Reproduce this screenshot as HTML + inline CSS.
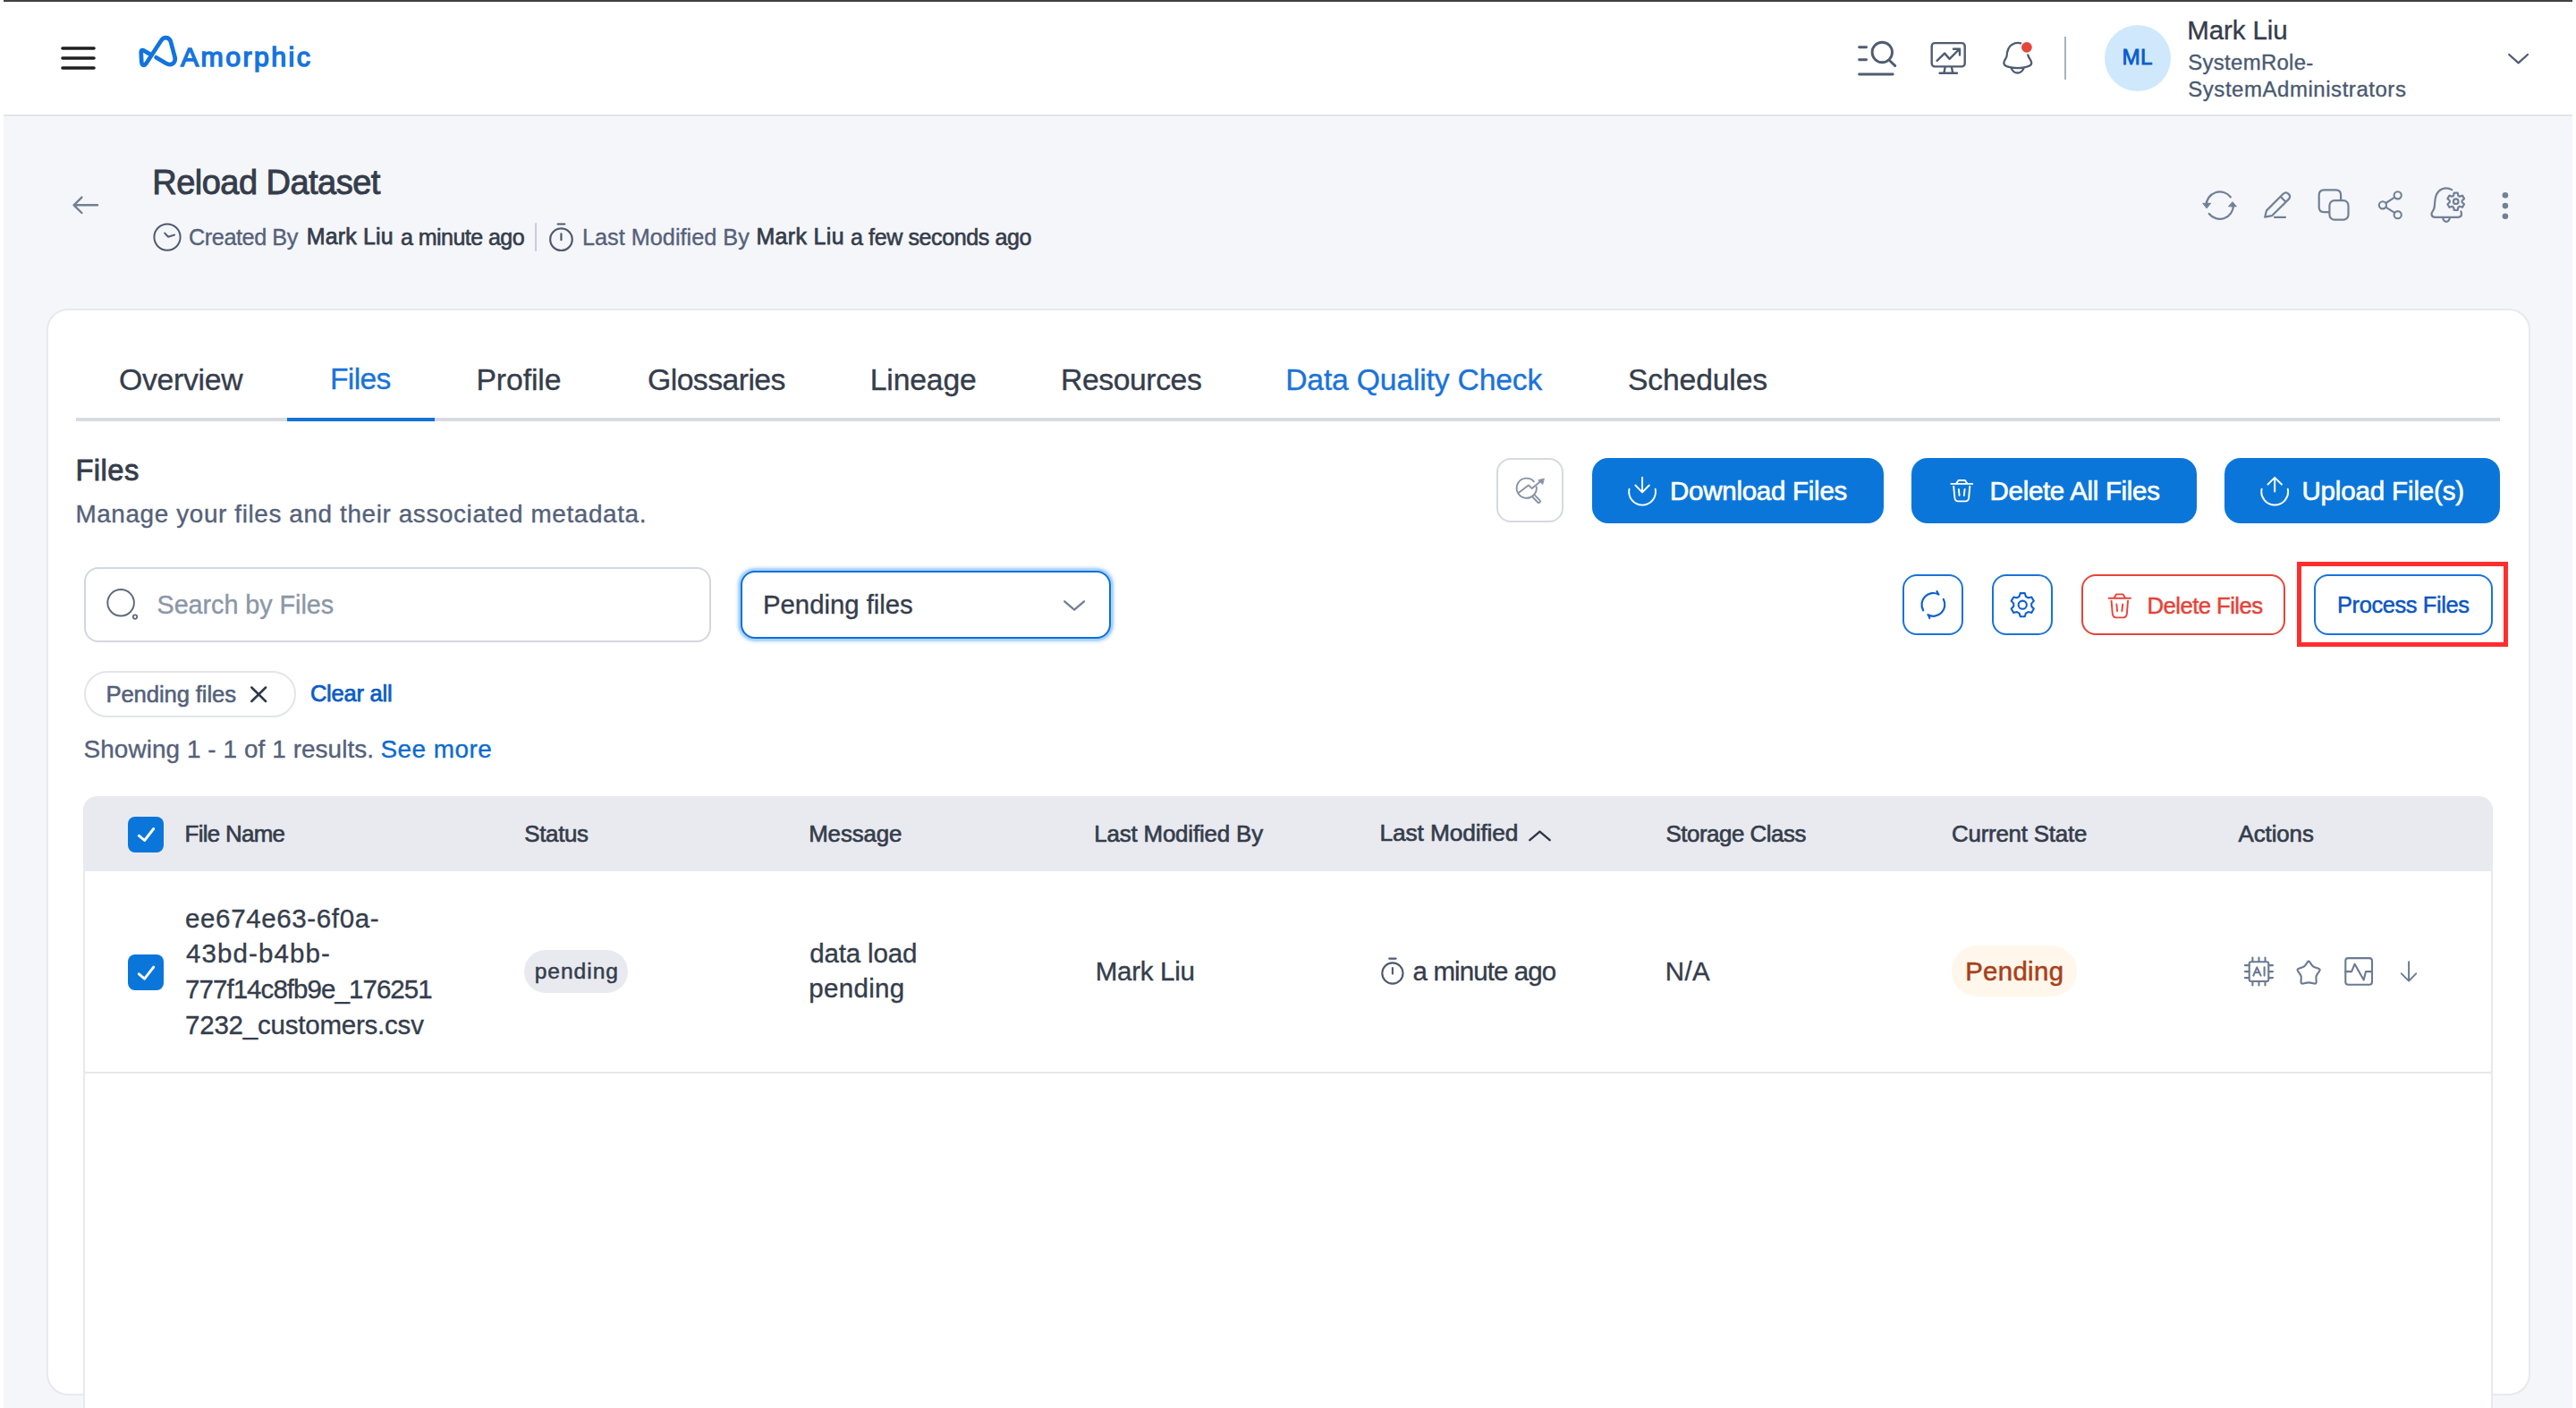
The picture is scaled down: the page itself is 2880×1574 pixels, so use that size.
<!DOCTYPE html>
<html><head><meta charset="utf-8"><style>
html,body{margin:0;padding:0;}
body{width:2880px;height:1574px;overflow:hidden;position:relative;background:#fff;font-family:"Liberation Sans",sans-serif;}
.s{position:absolute;box-sizing:border-box;}
.t{position:absolute;white-space:pre;font-family:"Liberation Sans",sans-serif;}
</style></head><body>
<div class=s style="left:4px;top:0;width:2872px;height:2px;background:#3f4142"></div>
<div class=s style="left:4px;top:128px;width:2872px;height:2px;background:#e3e5ea"></div>
<div class=s style="left:4px;top:130px;width:2872px;height:1444px;background:#f5f6fa"></div>
<div class=s style="left:52px;top:345px;width:2777px;height:1215px;background:#fff;border:2px solid #e7e9ee;border-radius:24px"></div>
<div class=s style="left:85px;top:467px;width:2710px;height:3.5px;background:#d8dce2"></div>
<div class=s style="left:321px;top:467px;width:165px;height:4px;background:#1472d8"></div>
<div class=s style="left:1673px;top:512px;width:75px;height:72px;border:2px solid #d5d9e0;border-radius:16px"></div>
<div class=s style="left:1780px;top:512px;width:326px;height:73px;background:#0b76d9;border-radius:18px"></div>
<div class=s style="left:2137px;top:512px;width:319px;height:73px;background:#0b76d9;border-radius:18px"></div>
<div class=s style="left:2487px;top:512px;width:308px;height:73px;background:#0b76d9;border-radius:18px"></div>
<div class=s style="left:94px;top:634px;width:701px;height:84px;border:2px solid #d3d7de;border-radius:16px;background:#fff"></div>
<div class=s style="left:828px;top:638px;width:414px;height:76px;border:2px solid #0b70d8;border-radius:16px;background:#fff;box-shadow:0 0 0 2.5px #a9d2fa,0 0 3px 4px rgba(165,208,250,0.6)"></div>
<div class=s style="left:2127px;top:642px;width:68px;height:68px;border:2px solid #1a73d9;border-radius:16px"></div>
<div class=s style="left:2227px;top:642px;width:68px;height:68px;border:2px solid #1a73d9;border-radius:16px"></div>
<div class=s style="left:2327px;top:642px;width:228px;height:68px;border:2px solid #e5443a;border-radius:16px"></div>
<div class=s style="left:2587px;top:642px;width:200px;height:68px;border:2px solid #1a73d9;border-radius:16px"></div>
<div class=s style="left:2568px;top:628px;width:236px;height:95px;border:5px solid #fe2e2e"></div>
<div class=s style="left:94px;top:750px;width:237px;height:52px;border:2px solid #e3e5ea;border-radius:26px"></div>
<div class=s style="left:93px;top:890px;width:2694px;height:700px;border:2px solid #e8e9ee;border-top:0;border-radius:16px 16px 0 0;background:#fff"></div>
<div class=s style="left:93px;top:890px;width:2694px;height:84px;background:#e9eaf0;border-radius:16px 16px 0 0"></div>
<div class=s style="left:95px;top:1198px;width:2690px;height:2px;background:#e8e9ee"></div>
<div class=s style="left:143px;top:913px;width:40px;height:40px;background:#0b76d9;border-radius:8px"></div>
<div class=s style="left:143px;top:1067px;width:40px;height:40px;background:#0b76d9;border-radius:8px"></div>
<div class=s style="left:586px;top:1062px;width:116px;height:48px;background:#e9eaf0;border-radius:24px"></div>
<div class=s style="left:2182px;top:1057px;width:140px;height:57px;background:#fff7eb;border-radius:28px"></div>
<div class=s style="left:2353px;top:28px;width:74px;height:74px;background:#cfe8fb;border-radius:50%"></div>
<div class=s style="left:2308px;top:41px;width:2px;height:48px;background:#a7b2c1"></div>

<svg class=s style="left:0;top:0" width="2880" height="1574" viewBox="0 0 2880 1574" fill="none" stroke-linecap="round" stroke-linejoin="round"><path stroke="#1f1f1f" stroke-width="3.6" d="M70 54H105M70 65H105M70 76H105"/>
<path stroke="#1273de" stroke-width="4.7" d="M174.6 64.2L185.5 70.8Q190.5 73.6 194 70.4Q196.4 68 195.6 64.2L190.8 46.3Q189.4 42.1 185.2 42.1Q182.2 42.1 180.2 45.3L163.2 71.2Q161.6 73.4 159.8 72.6Q158.4 71.8 158.3 69.6L157.7 58.4Q157.6 55.3 160.3 56.3L167.8 60.6"/>
<g stroke="#505c71" stroke-width="2.9"><path d="M2078.6 52.8H2086.6M2078.6 66.7H2086.6M2078.6 83H2116.2M2113.2 68.2L2118.8 73.6"/><circle cx="2104.3" cy="58.5" r="11.2"/></g>
<g stroke="#505c71" stroke-width="2.4"><rect x="2159.7" y="48.1" width="37" height="26.3" rx="3.5"/><path d="M2174.6 75.2L2173.4 81.6M2182 75.2L2183.2 81.6M2168.6 81.8H2188M2165.6 67.9L2174.1 59.6L2179.6 65.9L2190.4 55M2184 54.8H2191V61.6"/></g>
<g stroke="#505c71" stroke-width="2.3"><path d="M2259.2 48.3C2257.5 47.8 2253 47.5 2249.2 50C2245.2 52.6 2243.9 57 2243.6 62.5C2243.4 65.2 2240.2 67.6 2240.3 70.6C2240.5 73.8 2244 74.9 2250 75.7C2253.5 76.2 2258 76.2 2261.5 75.7C2267 74.9 2271.3 73.6 2271.3 70.6C2271.3 67.2 2267.6 64.6 2267.3 61.4M2248.5 76.1C2250 79.5 2252.5 81.5 2255.6 81.5C2258.7 81.5 2261.2 79.5 2262.7 76.1"/></g>
<circle cx="2265.9" cy="52.8" r="5.9" fill="#e4473b"/>
<path stroke="#505c71" stroke-width="2.3" d="M2805.2 61L2815.6 70.4L2826 61"/>
<path stroke="#718096" stroke-width="2.4" d="M82.6 229.3H109M91.4 220.6L82.6 229.3L91.4 238"/>
<g stroke="#4e5a6e" stroke-width="2"><circle cx="187" cy="265.1" r="14.6"/><path d="M184.2 260.6L188.1 264.8L195 262.6"/></g>
<rect x="598.1" y="249.3" width="1.9" height="31.5" fill="#c6cbd6" stroke="none"/>
<g stroke="#4e5a6e" stroke-width="2.2"><circle cx="627.45" cy="267.7" r="12.3"/><path d="M623.6 250.5H631.3M627.45 261.4V268.2"/></g>
<g stroke="#718096" stroke-width="2.3"><path d="M2466.60 230.60L2466.60 229.60A15.2 15.2 0 0 1 2493.78 220.24M2469.82 238.96A15.2 15.2 0 0 0 2497.00 229.60L2497.00 228.60"/></g>
<path fill="#718096" stroke="#718096" stroke-width="1" d="M2463.2 227.3H2471.6L2467.3 232.6Z M2491.9 230.8H2500.3L2496.2 225.9Z"/>
<g stroke="#718096" stroke-width="2.2"><path d="M2532.2 242.6L2534 235.4L2552.6 216.8Q2555.7 213.9 2558.7 216.9Q2561.6 219.9 2558.6 222.9L2540 241.2Z M2549.6 219.8L2555.6 225.8 M2543 242.8H2555"/></g>
<g stroke="#718096" stroke-width="2.2"><path d="M2603.6 237.2H2598.4Q2592.7 237.2 2592.7 231.6V218.1Q2592.7 212.4 2598.4 212.4H2611.5Q2617.1 212.4 2617.1 218.1V223.8"/><rect x="2604.4" y="224.1" width="21.1" height="21.5" rx="5.6"/></g>
<g stroke="#718096" stroke-width="2.1"><circle cx="2663.9" cy="229.3" r="4.1"/><circle cx="2680.7" cy="218.3" r="4.1"/><circle cx="2680.7" cy="240.2" r="4.1"/><path d="M2667.4 227L2677.2 220.6M2667.4 231.6L2677.2 237.9"/></g>
<g stroke="#718096" stroke-width="2.2"><path d="M2741.3 212.1C2739.5 211 2737.4 210.3 2735 210.3C2731.5 210.3 2728.6 211.6 2726.4 214C2723.8 216.8 2722.6 220.6 2722.3 225L2721.7 231.5C2721.5 233.2 2720.8 234.7 2719.9 235.9C2718.8 237.4 2718.3 238.6 2718.5 239.8C2718.8 241.6 2720.2 242.8 2722.2 242.8H2748.2C2750.6 242.8 2752 241.4 2752 239.6C2752 238.4 2751.7 237.3 2751.4 236.3M2730.9 243C2731.6 245.9 2733.1 247.8 2735 247.8C2736.9 247.8 2738.4 245.9 2739.1 243"/>
<path d="M2743.08 218.71 L2743.66 215.61 L2747.74 215.61 L2748.32 218.71 L2750.01 219.68 L2752.98 218.64 L2755.02 222.17 L2752.63 224.23 L2752.63 226.17 L2755.02 228.23 L2752.98 231.76 L2750.01 230.72 L2748.32 231.69 L2747.74 234.79 L2743.66 234.79 L2743.08 231.69 L2741.39 230.72 L2738.42 231.76 L2736.38 228.23 L2738.77 226.17 L2738.77 224.23 L2736.38 222.17 L2738.42 218.64 L2741.39 219.68ZM2748.50 225.20A2.8 2.8 0 1 1 2742.90 225.20A2.8 2.8 0 1 1 2748.50 225.20Z"/></g>
<g fill="#718096" stroke="none"><circle cx="2800.9" cy="218.3" r="3.3"/><circle cx="2800.9" cy="230.1" r="3.3"/><circle cx="2800.9" cy="241.7" r="3.3"/></g>
<g stroke="#8792a5" stroke-width="1.9"><path d="M1717.74 544.16A11.1 11.1 0 1 1 1715.00 538.27"/><path d="M1698 550.7L1708.8 542.4L1712.7 546L1721.5 538.8"/><path d="M1716.2 553.8L1721.6 559.4Q1722.6 560.6 1721.4 561.6Q1720.3 562.6 1719.2 561.5L1713.8 556"/></g>
<path fill="#8792a5" stroke="#8792a5" stroke-width="1" d="M1726 535.2L1719.9 536.7L1724.5 541.2Z"/>
<g stroke="#ffffff" stroke-width="1.9"><path d="M1836.1 533.8V550M1828.4 542.5L1836.1 550.3L1843.8 542.5M1821.5 546.7A14.9 14.9 0 1 0 1850.7 546.7"/></g>
<g stroke="#ffffff" stroke-width="1.9"><path d="M2181.40 540.90H2205.20M2187.30 540.40L2189.60 537.00H2196.90L2199.20 540.40M2184.20 543.60L2185.40 556.40Q2185.90 560.40 2189.30 560.40H2197.30Q2200.70 560.40 2201.20 556.40L2202.30 543.60M2189.90 547.00L2190.60 553.90M2196.60 547.00L2195.80 553.90"/></g>
<g stroke="#ffffff" stroke-width="1.9"><path d="M2543.2 549.5V534M2535.5 541.5L2543.2 533.8L2550.9 541.5M2528.6 546.7A14.9 14.9 0 1 0 2557.8 546.7"/></g>
<g stroke="#5f6b7e" stroke-width="2"><circle cx="135.1" cy="673.8" r="14.8"/><circle cx="151" cy="689.6" r="2.2" stroke-width="1.8"/></g>
<path stroke="#718096" stroke-width="2.3" d="M1190.2 672.3L1201.1 681.7L1212 672.3"/>
<g stroke="#0e60cd" stroke-width="2.2"><path d="M2150.23 682.35A12.9 12.9 0 0 1 2167.46 664.51L2167.2 664.4L2165.5 661.1"/><path d="M2172.79 669.84A12.9 12.9 0 0 1 2155.34 687.29L2156.1 687.6L2157.3 691"/></g>
<path stroke="#0e60cd" stroke-width="2.1" d="M2257.63 666.77 L2258.71 663.14 L2263.79 663.14 L2264.87 666.77 L2267.61 668.35 L2271.29 667.47 L2273.83 671.87 L2271.23 674.62 L2271.23 677.78 L2273.83 680.53 L2271.29 684.93 L2267.61 684.05 L2264.87 685.63 L2263.79 689.26 L2258.71 689.26 L2257.63 685.63 L2254.89 684.05 L2251.21 684.93 L2248.67 680.53 L2251.27 677.78 L2251.27 674.62 L2248.67 671.87 L2251.21 667.47 L2254.89 668.35ZM2265.85 676.20A4.6 4.6 0 1 1 2256.65 676.20A4.6 4.6 0 1 1 2265.85 676.20Z"/>
<g stroke="#e5443a" stroke-width="1.9"><path d="M2357.71 668.70H2381.98M2363.73 668.14L2366.07 664.37H2373.52L2375.86 668.14M2360.56 671.70L2361.79 685.90Q2362.30 690.34 2365.77 690.34H2373.93Q2377.39 690.34 2377.90 685.90L2379.03 671.70M2366.38 675.47L2367.09 683.13M2373.21 675.47L2372.40 683.13"/></g>
<path stroke="#2d3748" stroke-width="2.5" d="M281.3 768.5L297.1 784M297.1 768.5L281.3 784"/>
<path stroke="#fff" stroke-width="2.9" d="M155.3 934.2L161.6 939.5L171.7 926.5"/>
<path stroke="#fff" stroke-width="2.9" d="M155.3 1088.8L161.6 1094.1L171.7 1081.1"/>
<path stroke="#2d3748" stroke-width="2.4" d="M1710.3 939.2L1721.5 929.6L1732.7 939.2"/>
<g stroke="#4e5a6e" stroke-width="2.1"><circle cx="1556.9" cy="1088" r="11.6"/><path d="M1553.2 1071.6H1560.6M1556.9 1082V1088.6"/></g>
<g stroke="#6b7a92" stroke-width="2.1"><rect x="2514.7" y="1075.2" width="21.6" height="21.8" rx="2"/><path d="M2518.4 1070.6V1075M2525.5 1070.6V1075M2532.5 1070.6V1075M2518.4 1097.2V1101.4M2525.5 1097.2V1101.4M2532.5 1097.2V1101.4M2509.9 1079.1H2514.5M2509.9 1086.1H2514.5M2509.9 1093.1H2514.5M2536.5 1079.1H2541M2536.5 1086.1H2541M2536.5 1093.1H2541M2519.4 1090.6L2523.3 1081.4L2527.6 1090.6M2520.6 1087.3H2526.3M2531.6 1081.4V1090.6"/></g>
<path stroke="#6b7a92" stroke-width="2.1" d="M2579.76 1075.59Q2581.10 1073.60 2582.44 1075.59L2584.84 1079.14Q2585.90 1080.70 2587.81 1081.34L2592.16 1082.79Q2594.60 1083.60 2593.12 1085.67L2590.47 1089.37Q2589.30 1091.00 2589.41 1092.98L2589.66 1097.48Q2589.80 1100.00 2587.36 1099.50L2583.01 1098.60Q2581.10 1098.20 2579.19 1098.60L2574.84 1099.50Q2572.40 1100.00 2572.54 1097.48L2572.79 1092.98Q2572.90 1091.00 2571.73 1089.37L2569.08 1085.67Q2567.60 1083.60 2570.04 1082.79L2574.39 1081.34Q2576.30 1080.70 2577.36 1079.14Z"/>
<g stroke="#6b7a92" stroke-width="2.1"><rect x="2622.3" y="1071.1" width="29.7" height="29.7" rx="3"/><path d="M2622.3 1086.1H2629.1L2632.6 1077.7L2642.7 1095.4L2645 1086.1H2652"/></g>
<path stroke="#6b7a92" stroke-width="2" d="M2693.1 1075.2V1096.5M2684.8 1088.4L2693.1 1096.6L2701.2 1088.4"/></svg>
<div class=t style='left:202.00px;top:48.70px;font-size:30.28px;line-height:30.28px;font-weight:400;letter-spacing:2.429px;color:#1674de;-webkit-text-stroke:1.45px #1674de;'>Amorphic</div><div class=t style='left:2372.50px;top:51.90px;font-size:24.26px;line-height:24.26px;font-weight:400;letter-spacing:0.200px;color:#0b5ccc;-webkit-text-stroke:0.85px #0b5ccc;'>ML</div><div class=t style='left:2445.30px;top:19.10px;font-size:29.49px;line-height:29.49px;font-weight:400;letter-spacing:-0.100px;color:#353d4b;-webkit-text-stroke:0.35px #353d4b;'>Mark Liu</div><div class=t style='left:2446.30px;top:57.60px;font-size:23.97px;line-height:23.97px;font-weight:400;letter-spacing:0.280px;color:#4a5a70;-webkit-text-stroke:0.35px #4a5a70;'>SystemRole-</div><div class=t style='left:2446.30px;top:88.40px;font-size:23.97px;line-height:23.97px;font-weight:400;letter-spacing:0.553px;color:#4a5a70;-webkit-text-stroke:0.35px #4a5a70;'>SystemAdministrators</div><div class=t style='left:170.30px;top:184.50px;font-size:37.98px;line-height:37.98px;font-weight:400;letter-spacing:-0.515px;color:#353d4b;-webkit-text-stroke:0.95px #353d4b;'>Reload Dataset</div><div class=t style='left:211.00px;top:252.80px;font-size:25.28px;line-height:25.28px;font-weight:400;letter-spacing:-0.444px;color:#55617a;-webkit-text-stroke:0.35px #55617a;'>Created By</div><div class=t style='left:342.70px;top:251.80px;font-size:24.93px;line-height:24.93px;font-weight:400;letter-spacing:0.186px;color:#353d4b;-webkit-text-stroke:0.75px #353d4b;'>Mark Liu</div><div class=t style='left:448.00px;top:252.80px;font-size:25.06px;line-height:25.06px;font-weight:400;letter-spacing:-0.564px;color:#353d4b;-webkit-text-stroke:0.6px #353d4b;'>a minute ago</div><div class=t style='left:651.00px;top:252.80px;font-size:25.28px;line-height:25.28px;font-weight:400;letter-spacing:0.000px;color:#55617a;-webkit-text-stroke:0.35px #55617a;'>Last Modified By</div><div class=t style='left:845.50px;top:251.80px;font-size:24.93px;line-height:24.93px;font-weight:400;letter-spacing:0.357px;color:#353d4b;-webkit-text-stroke:0.75px #353d4b;'>Mark Liu</div><div class=t style='left:951.00px;top:252.80px;font-size:25.06px;line-height:25.06px;font-weight:400;letter-spacing:-0.400px;color:#353d4b;-webkit-text-stroke:0.6px #353d4b;'>a few seconds ago</div><div class=t style='left:133.00px;top:408.20px;font-size:33.71px;line-height:33.71px;font-weight:400;letter-spacing:-0.257px;color:#353d4b;-webkit-text-stroke:0.35px #353d4b;'>Overview</div><div class=t style='left:369.00px;top:406.60px;font-size:33.56px;line-height:33.56px;font-weight:400;letter-spacing:-0.650px;color:#1a73d9;-webkit-text-stroke:0.35px #1a73d9;'>Files</div><div class=t style='left:532.40px;top:408.20px;font-size:33.71px;line-height:33.71px;font-weight:400;letter-spacing:-0.067px;color:#353d4b;-webkit-text-stroke:0.35px #353d4b;'>Profile</div><div class=t style='left:724.00px;top:408.20px;font-size:33.71px;line-height:33.71px;font-weight:400;letter-spacing:-0.533px;color:#353d4b;-webkit-text-stroke:0.35px #353d4b;'>Glossaries</div><div class=t style='left:972.80px;top:408.20px;font-size:33.71px;line-height:33.71px;font-weight:400;letter-spacing:-0.167px;color:#353d4b;-webkit-text-stroke:0.35px #353d4b;'>Lineage</div><div class=t style='left:1186.00px;top:408.20px;font-size:33.71px;line-height:33.71px;font-weight:400;letter-spacing:-0.412px;color:#353d4b;-webkit-text-stroke:0.35px #353d4b;'>Resources</div><div class=t style='left:1437.20px;top:408.20px;font-size:33.71px;line-height:33.71px;font-weight:400;letter-spacing:-0.188px;color:#1a73d9;-webkit-text-stroke:0.35px #1a73d9;'>Data Quality Check</div><div class=t style='left:1820.00px;top:408.20px;font-size:33.71px;line-height:33.71px;font-weight:400;letter-spacing:-0.162px;color:#353d4b;-webkit-text-stroke:0.35px #353d4b;'>Schedules</div><div class=t style='left:84.40px;top:509.90px;font-size:32.69px;line-height:32.69px;font-weight:400;letter-spacing:0.475px;color:#353d4b;-webkit-text-stroke:0.85px #353d4b;'>Files</div><div class=t style='left:84.40px;top:561.00px;font-size:27.89px;line-height:27.89px;font-weight:400;letter-spacing:0.619px;color:#55617a;-webkit-text-stroke:0.35px #55617a;'>Manage your files and their associated metadata.</div><div class=t style='left:1867.00px;top:533.60px;font-size:29.52px;line-height:29.52px;font-weight:400;letter-spacing:-0.269px;color:#ffffff;-webkit-text-stroke:0.65px #ffffff;'>Download Files</div><div class=t style='left:2224.60px;top:533.60px;font-size:29.52px;line-height:29.52px;font-weight:400;letter-spacing:-0.327px;color:#ffffff;-webkit-text-stroke:0.65px #ffffff;'>Delete All Files</div><div class=t style='left:2573.40px;top:533.60px;font-size:29.52px;line-height:29.52px;font-weight:400;letter-spacing:-0.146px;color:#ffffff;-webkit-text-stroke:0.65px #ffffff;'>Upload File(s)</div><div class=t style='left:175.50px;top:661.80px;font-size:28.76px;line-height:28.76px;font-weight:400;letter-spacing:-0.036px;color:#8b97a8;-webkit-text-stroke:0.35px #8b97a8;'>Search by Files</div><div class=t style='left:853.00px;top:661.00px;font-size:29.35px;line-height:29.35px;font-weight:400;letter-spacing:-0.025px;color:#353d4b;-webkit-text-stroke:0.35px #353d4b;'>Pending files</div><div class=t style='left:2400.60px;top:664.50px;font-size:25.73px;line-height:25.73px;font-weight:400;letter-spacing:-0.573px;color:#e5443a;-webkit-text-stroke:0.5px #e5443a;'>Delete Files</div><div class=t style='left:2613.00px;top:664.20px;font-size:25.44px;line-height:25.44px;font-weight:400;letter-spacing:-0.400px;color:#0b56c4;-webkit-text-stroke:0.5px #0b56c4;'>Process Files</div><div class=t style='left:118.40px;top:764.20px;font-size:25.68px;line-height:25.68px;font-weight:400;letter-spacing:-0.117px;color:#55617a;-webkit-text-stroke:0.55px #55617a;'>Pending files</div><div class=t style='left:346.90px;top:763.00px;font-size:25.51px;line-height:25.51px;font-weight:400;letter-spacing:-0.225px;color:#0b5cc7;-webkit-text-stroke:0.75px #0b5cc7;'>Clear all</div><div class=t style='left:93.60px;top:824.10px;font-size:27.89px;line-height:27.89px;font-weight:400;letter-spacing:0.085px;color:#55617a;-webkit-text-stroke:0.35px #55617a;'>Showing 1 - 1 of 1 results.</div><div class=t style='left:425.50px;top:824.10px;font-size:27.89px;line-height:27.89px;font-weight:400;letter-spacing:0.471px;color:#0b6bd0;-webkit-text-stroke:0.35px #0b6bd0;'>See more</div><div class=t style='left:206.60px;top:919.80px;font-size:25.89px;line-height:25.89px;font-weight:400;letter-spacing:-0.687px;color:#353d4b;-webkit-text-stroke:0.65px #353d4b;'>File Name</div><div class=t style='left:586.30px;top:919.80px;font-size:25.89px;line-height:25.89px;font-weight:400;letter-spacing:-0.320px;color:#353d4b;-webkit-text-stroke:0.65px #353d4b;'>Status</div><div class=t style='left:904.20px;top:919.80px;font-size:25.89px;line-height:25.89px;font-weight:400;letter-spacing:-0.117px;color:#353d4b;-webkit-text-stroke:0.65px #353d4b;'>Message</div><div class=t style='left:1223.20px;top:919.80px;font-size:25.89px;line-height:25.89px;font-weight:400;letter-spacing:-0.160px;color:#353d4b;-webkit-text-stroke:0.65px #353d4b;'>Last Modified By</div><div class=t style='left:1862.50px;top:919.80px;font-size:25.89px;line-height:25.89px;font-weight:400;letter-spacing:-0.475px;color:#353d4b;-webkit-text-stroke:0.65px #353d4b;'>Storage Class</div><div class=t style='left:2182.00px;top:919.80px;font-size:25.89px;line-height:25.89px;font-weight:400;letter-spacing:-0.217px;color:#353d4b;-webkit-text-stroke:0.65px #353d4b;'>Current State</div><div class=t style='left:2502.50px;top:919.80px;font-size:25.89px;line-height:25.89px;font-weight:400;letter-spacing:-0.083px;color:#353d4b;-webkit-text-stroke:0.65px #353d4b;'>Actions</div><div class=t style='left:1542.60px;top:918.20px;font-size:26.32px;line-height:26.32px;font-weight:400;letter-spacing:-0.142px;color:#353d4b;-webkit-text-stroke:0.65px #353d4b;'>Last Modified</div><div class=t style='left:207.00px;top:1011.60px;font-size:29.49px;line-height:29.49px;font-weight:400;letter-spacing:0.646px;color:#353d4b;-webkit-text-stroke:0.35px #353d4b;'>ee674e63-6f0a-</div><div class=t style='left:208.00px;top:1051.20px;font-size:29.49px;line-height:29.49px;font-weight:400;letter-spacing:1.111px;color:#353d4b;-webkit-text-stroke:0.35px #353d4b;'>43bd-b4bb-</div><div class=t style='left:207.00px;top:1090.80px;font-size:29.49px;line-height:29.49px;font-weight:400;letter-spacing:-0.933px;color:#353d4b;-webkit-text-stroke:0.35px #353d4b;'>777f14c8fb9e_176251</div><div class=t style='left:207.00px;top:1130.90px;font-size:29.49px;line-height:29.49px;font-weight:400;letter-spacing:-0.206px;color:#353d4b;-webkit-text-stroke:0.35px #353d4b;'>7232_customers.csv</div><div class=t style='left:597.70px;top:1074.00px;font-size:24.6px;line-height:24.6px;font-weight:400;letter-spacing:0.967px;color:#353d4b;-webkit-text-stroke:0.5px #353d4b;'>pending</div><div class=t style='left:905.20px;top:1050.60px;font-size:29.49px;line-height:29.49px;font-weight:400;letter-spacing:-0.150px;color:#353d4b;-webkit-text-stroke:0.35px #353d4b;'>data load</div><div class=t style='left:904.20px;top:1090.00px;font-size:29.49px;line-height:29.49px;font-weight:400;letter-spacing:0.350px;color:#353d4b;-webkit-text-stroke:0.35px #353d4b;'>pending</div><div class=t style='left:1224.75px;top:1070.90px;font-size:29.49px;line-height:29.49px;font-weight:400;letter-spacing:-0.279px;color:#353d4b;-webkit-text-stroke:0.35px #353d4b;'>Mark Liu</div><div class=t style='left:1579.60px;top:1070.90px;font-size:29.49px;line-height:29.49px;font-weight:400;letter-spacing:-0.891px;color:#353d4b;-webkit-text-stroke:0.35px #353d4b;'>a minute ago</div><div class=t style='left:1861.80px;top:1070.90px;font-size:29.49px;line-height:29.49px;font-weight:400;letter-spacing:0.400px;color:#353d4b;-webkit-text-stroke:0.35px #353d4b;'>N/A</div><div class=t style='left:2197.20px;top:1070.90px;font-size:29.32px;line-height:29.32px;font-weight:400;letter-spacing:0.367px;color:#a8401a;-webkit-text-stroke:0.55px #a8401a;'>Pending</div>
</body></html>
